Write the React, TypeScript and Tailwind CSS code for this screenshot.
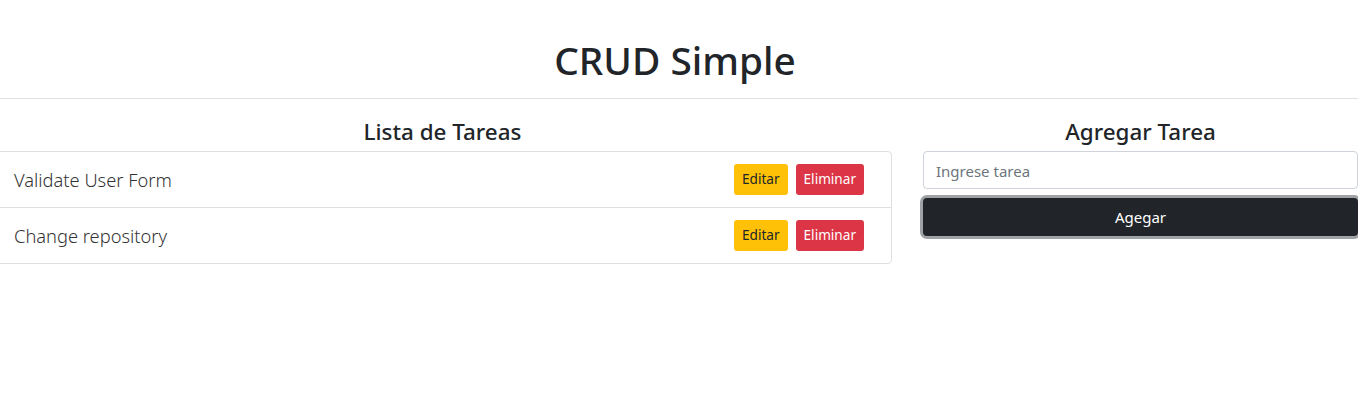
const tasks = ['Validate User Form', 'Change repository'];

export default function App() {
  return (
    <div className="min-h-[416px] bg-white text-[#212529] overflow-hidden font-['Noto_Sans','Open_Sans',sans-serif]">
      <h1 className="pt-[36px] pr-[8px] text-center text-[38.8px] leading-[48px] font-medium">CRUD Simple</h1>
      <hr className="mt-[14px] border-t border-[#e1e1e1]" />
      <div className="flex gap-[31px] mt-[18px]">
        <div className="-ml-[7px] flex-1">
          <h3 className="text-center text-[22.4px] leading-[29px] font-medium mb-[5px]">Lista de Tareas</h3>
          <ul className="border border-[#dfdfdf] rounded-[4px]">
            {tasks.map((t, i) => (
              <li
                key={t}
                className={`box-content flex items-center justify-between h-[55px] pl-[20px] pr-[27px] ${i > 0 ? 'border-t border-[#dfdfdf]' : ''}`}
              >
                <span className="text-[18.3px] font-light text-[#333]">{t}</span>
                <div className="flex gap-[8px]">
                  <button className="h-[31px] px-[8px] rounded-[3px] bg-[#ffc107] text-[13.6px] text-[#212529]">Editar</button>
                  <button className="h-[31px] px-[8px] rounded-[3px] bg-[#dc3545] text-[13.6px] text-white">Eliminar</button>
                </div>
              </li>
            ))}
          </ul>
        </div>
        <div className="w-[435px]">
          <h3 className="text-center text-[22.4px] leading-[29px] font-medium mb-[5px]">Agregar Tarea</h3>
          <input
            className="w-full h-[38px] px-[12px] pt-[1px] border border-[#ced4da] rounded-[4px] text-[15px] placeholder:text-[#6c757d] outline-none"
            placeholder="Ingrese tarea"
          />
          <button className="mt-[9px] w-full h-[38px] rounded-[4px] bg-[#212529] text-white text-[15px] ring-[3px] ring-[#a0a3a6]">
            Agegar
          </button>
        </div>
      </div>
    </div>
  );
}
